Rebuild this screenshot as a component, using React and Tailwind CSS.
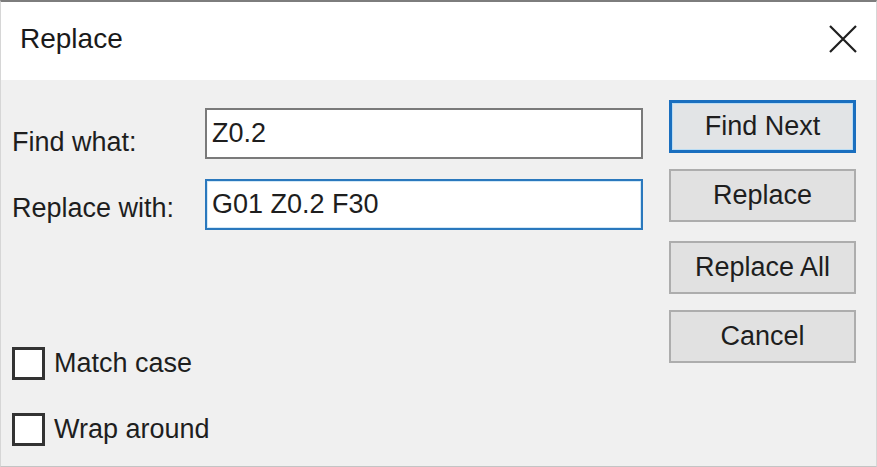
import React from "react";

const CloseIcon = () => (
  <svg width="28" height="28" viewBox="0 0 28 28" className="block">
    <path d="M1 1 L27 27 M27 1 L1 27" stroke="#1f1f1f" strokeWidth="2.2" fill="none" />
  </svg>
);

const Checkbox = ({ label }) => (
  <label className="flex items-center h-[33px]">
    <span className="w-[33px] h-[33px] border-[3px] border-[#333333] bg-white" />
    <span className="ml-[9px] text-[27px] leading-none text-[#1e1e1e]">{label}</span>
  </label>
);

const DialogButton = ({ children, focused, className = "" }) => (
  <button
    type="button"
    className={
      (focused
        ? "w-[187px] h-[53px] border-[3px] border-[#1a6fbf] bg-[#e2e4e6] shadow-[inset_0_0_0_1px_#b9dcf4] text-[27px] leading-none text-[#1e1e1e] "
        : "w-[187px] h-[53px] border-2 border-[#adadad] bg-[#e1e1e1] text-[27px] leading-none text-[#1e1e1e] ") + className
    }
  >
    {children}
  </button>
);

export default function App() {
  return (
    <div className="w-[877px] h-[467px] flex flex-col border-t-2 border-t-[#7d7d7d] border-x border-x-[#d6d6d6] border-b border-b-[#c4c4c4] font-['Liberation_Sans',Arial,sans-serif] text-[#1e1e1e] overflow-hidden">
      {/* Title bar */}
      <div className="h-[78px] bg-white flex items-center justify-between pl-[19px] pr-[19px] pb-[4px]">
        <span className="text-[28px] leading-none text-[#1a1a1a]">Replace</span>
        <CloseIcon />
      </div>

      {/* Body */}
      <div className="flex-1 bg-[#f0f0f0] flex pl-[11px]">
        <div className="w-[631px] flex flex-col">
          <div className="flex items-center h-[51px] mt-[28px]">
            <span className="w-[193px] pt-[17px] text-[27px] leading-none">Find what:</span>
            <input
              readOnly
              value="Z0.2"
              className="w-[438px] h-[51px] border-2 border-[#7a7a7a] bg-white pl-[5px] text-[27px] text-[#1e1e1e] outline-none"
            />
          </div>
          <div className="flex items-center h-[51px] mt-[20px]">
            <span className="w-[193px] pt-[7px] text-[27px] leading-none">Replace with:</span>
            <input
              readOnly
              value="G01 Z0.2 F30"
              className="w-[438px] h-[51px] border-2 border-[#2a78bd] bg-white shadow-[inset_0_0_0_1px_#d2e8f7] pl-[5px] text-[27px] text-[#1e1e1e] outline-none"
            />
          </div>
          <div className="mt-[117px] flex flex-col gap-[33px]">
            <Checkbox label="Match case" />
            <Checkbox label="Wrap around" />
          </div>
        </div>

        <div className="ml-[26px] pt-[20px] flex flex-col">
          <DialogButton focused>Find Next</DialogButton>
          <DialogButton className="mt-[16px]">Replace</DialogButton>
          <DialogButton className="mt-[19px]">Replace All</DialogButton>
          <DialogButton className="mt-[16px]">Cancel</DialogButton>
        </div>
      </div>
    </div>
  );
}
